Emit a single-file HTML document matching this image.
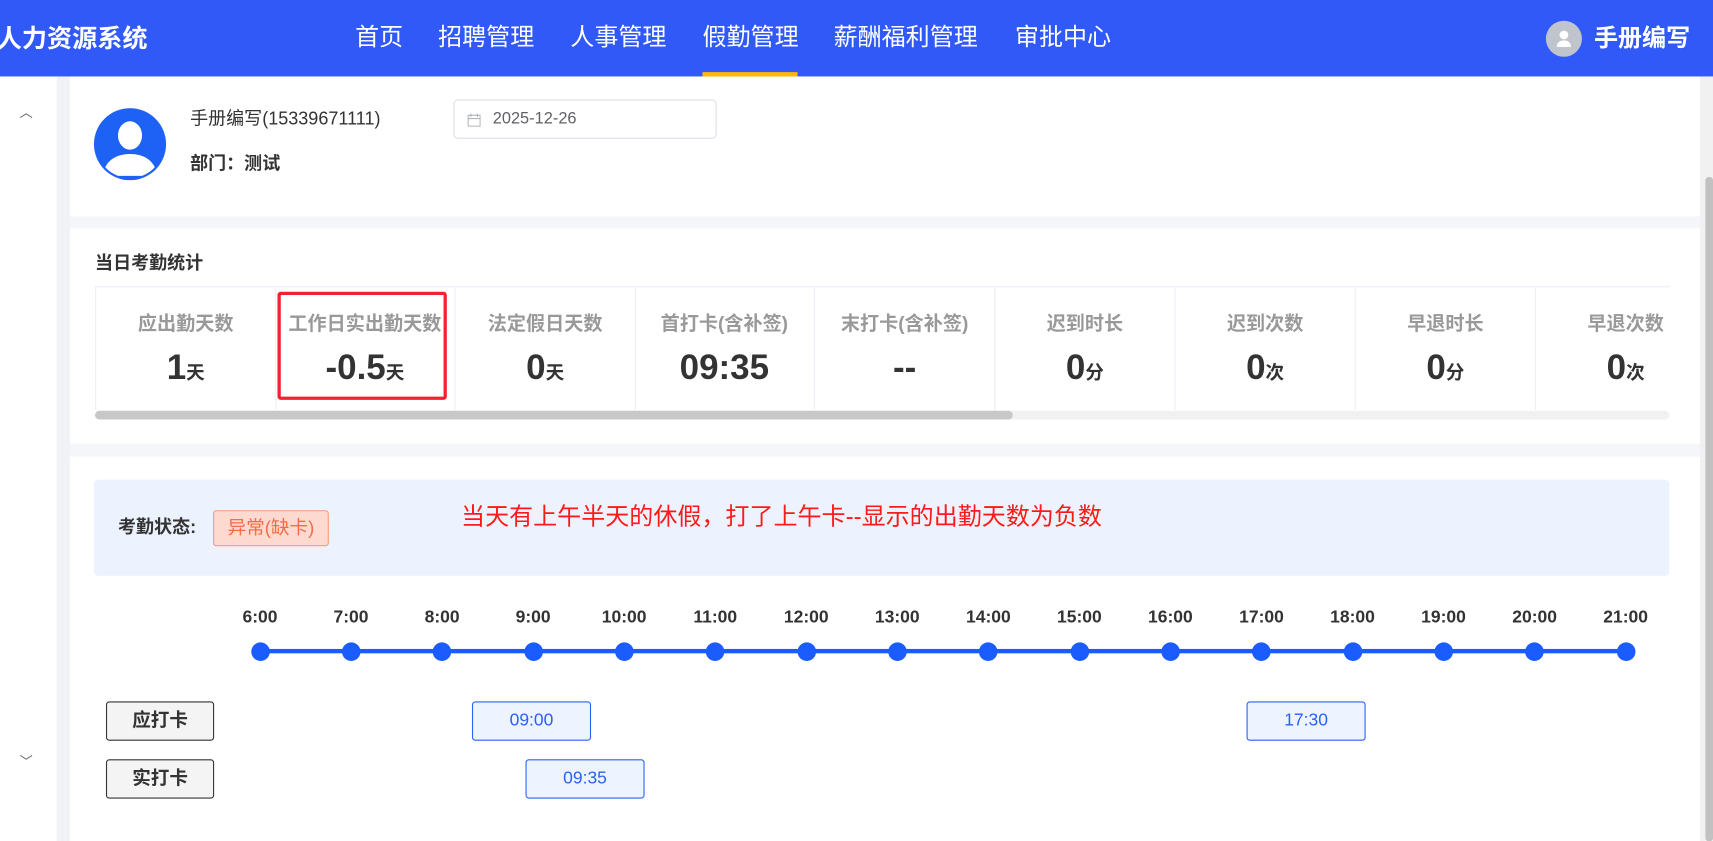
<!DOCTYPE html>
<html><head><meta charset="utf-8">
<style>
*{margin:0;padding:0;box-sizing:border-box}
html,body{width:1713px;height:841px;overflow:hidden;background:#fff}
body{font-family:"Liberation Sans","Noto Sans CJK SC",sans-serif;color:#333}
#w{position:absolute;left:0;top:0;width:1568px;height:770px;transform:scale(1.0925);transform-origin:0 0;background:#f5f6fa;overflow:hidden}
.a{position:absolute}
.nav{left:0;top:0;width:1568px;height:70px;background:#3059f7;color:#fff}
.nav .m{position:absolute;top:19px;font-size:22px;line-height:30px}
.cell{position:absolute;top:0;width:165px;height:113px;border-right:1px solid #ebeef5;text-align:center}
.cell .l{position:absolute;top:21px;left:-10px;right:-10px;font-size:17.5px;font-weight:bold;color:#999;line-height:24px}
.cell .v{position:absolute;top:53px;left:0;right:0;font-size:32px;font-weight:bold;color:#333;line-height:40px}
.cell .v small{font-size:17px}
.tl{position:absolute;top:556px;font-size:16px;font-weight:bold;width:60px;margin-left:-30px;text-align:center;line-height:20px}
.dot{position:absolute;top:588px;width:17px;height:17px;border-radius:50%;background:#1a5cff;margin-left:-8.5px}
.btn{position:absolute;left:97px;width:99px;height:36px;background:#f4f4f4;border:1px solid #333;border-radius:3px;font-size:17px;font-weight:bold;text-align:center;line-height:34px}
.chip{position:absolute;width:109px;height:36px;background:#edf3ff;border:1px solid #2b62f5;border-radius:3px;color:#2b62f5;font-size:16px;text-align:center;line-height:34px}
</style></head><body>
<div id="w">
<div class="a nav">
  <div class="a" style="left:-3px;top:19px;font-size:23px;font-weight:bold;line-height:32px">人力资源系统</div>
  <div class="m" style="left:325px">首页</div>
  <div class="m" style="left:401px">招聘管理</div>
  <div class="m" style="left:522px">人事管理</div>
  <div class="m" style="left:643px">假勤管理</div>
  <div class="a" style="left:643px;top:66px;width:87px;height:4px;background:#ffb800"></div>
  <div class="m" style="left:763px">薪酬福利管理</div>
  <div class="m" style="left:929px">审批中心</div>
  <div class="a" style="left:1415px;top:19px;width:33px;height:33px;border-radius:50%;background:#c0c4cc">
    <svg width="33" height="33" viewBox="0 0 33 33"><circle cx="16.5" cy="13" r="4" fill="#fff"/><path d="M10 24c0-4 3-6 6.5-6s6.5 2 6.5 6z" fill="#fff"/></svg>
  </div>
  <div class="a" style="left:1459px;top:20px;font-size:22px;font-weight:bold;line-height:30px">手册编写</div>
</div>
<div class="a" style="left:0;top:70px;width:52px;height:700px;background:#fff"></div>
<div class="a" style="left:52px;top:70px;width:12px;height:700px;background:#f0f2f5"></div>
<div class="a" style="left:18px;top:94px;font-size:12px;color:#666">︿</div>
<div class="a" style="left:18px;top:688px;font-size:12px;color:#666">﹀</div>
<div class="a" style="left:64px;top:70px;width:1492px;height:128px;background:#fff"></div>
<div class="a" style="left:64px;top:209px;width:1492px;height:197px;background:#fff"></div>
<div class="a" style="left:64px;top:418px;width:1492px;height:352px;background:#fff"></div>
<div class="a" style="left:1556px;top:70px;width:12px;height:700px;background:#f1f1f1"></div>
<div class="a" style="left:1561px;top:162px;width:7px;height:608px;background:#c1c1c1;border-radius:3px"></div>
<div class="a" style="left:86px;top:99px">
<svg width="66" height="66" viewBox="0 0 66 66"><defs><clipPath id="c"><circle cx="33" cy="33" r="31"/></clipPath></defs><circle cx="33" cy="33" r="33" fill="#1e62f5"/><g clip-path="url(#c)"><ellipse cx="33" cy="25" rx="11" ry="13" fill="#fff"/><path d="M8 62c2-14 12-20 25-20s23 6 25 20z" fill="#fff"/></g></svg>
</div>
<div class="a" style="left:174px;top:98px;font-size:16.5px;line-height:22px;color:#333">手册编写(15339671111)</div>
<div class="a" style="left:174px;top:139px;font-size:16.5px;line-height:22px;font-weight:bold">部门：测试</div>
<div class="a" style="left:415px;top:91px;width:241px;height:36px;border:1px solid #dcdfe6;border-radius:4px"></div>
<div class="a" style="left:428px;top:103px"><svg width="12" height="12" viewBox="0 0 12 12" fill="none" stroke="#b0b3b8"><rect x=".5" y="1.5" width="11" height="10"/><path d="M.5 4.5h11M3 0v3M9 0v3"/></svg></div>
<div class="a" style="left:451px;top:99px;font-size:15px;color:#606266;line-height:20px">2025-12-26</div>
<div class="a" style="left:87px;top:230px;font-size:16.5px;font-weight:bold;line-height:22px">当日考勤统计</div>
<div class="a" style="left:87px;top:262px;width:1441px;height:113px;border-top:1px solid #ebeef5;border-left:1px solid #ebeef5;overflow:hidden">
  <div class="cell" style="left:0"><div class="l">应出勤天数</div><div class="v">1<small>天</small></div></div>
  <div class="cell" style="left:164px"><div class="l">工作日实出勤天数</div><div class="v">-0.5<small>天</small></div></div>
  <div class="cell" style="left:329px"><div class="l">法定假日天数</div><div class="v">0<small>天</small></div></div>
  <div class="cell" style="left:493px"><div class="l">首打卡(含补签)</div><div class="v">09:35</div></div>
  <div class="cell" style="left:658px"><div class="l">末打卡(含补签)</div><div class="v">--</div></div>
  <div class="cell" style="left:823px"><div class="l">迟到时长</div><div class="v">0<small>分</small></div></div>
  <div class="cell" style="left:988px"><div class="l">迟到次数</div><div class="v">0<small>次</small></div></div>
  <div class="cell" style="left:1153px"><div class="l">早退时长</div><div class="v">0<small>分</small></div></div>
  <div class="cell" style="left:1318px"><div class="l">早退次数</div><div class="v">0<small>次</small></div></div>
</div>
<div class="a" style="left:254px;top:267px;width:155px;height:99px;border:3px solid #f5222d;border-radius:3px"></div>
<div class="a" style="left:87px;top:376px;width:1441px;height:8px;background:#f1f1f1;border-radius:4px"></div>
<div class="a" style="left:87px;top:376px;width:840px;height:8px;background:#c8c8c8;border-radius:4px"></div>
<div class="a" style="left:86px;top:439px;width:1442px;height:88px;background:#ecf3fe;border-radius:4px"></div>
<div class="a" style="left:108px;top:472px;font-size:16.5px;font-weight:bold;line-height:22px">考勤状态:</div>
<div class="a" style="left:195px;top:467px;width:106px;height:33px;background:#fdd9cf;border:1px solid #f89a7d;border-radius:3px;color:#f56c45;font-size:17px;text-align:center;line-height:31px">异常(缺卡)</div>
<div class="a" style="left:422px;top:459px;font-size:22px;color:#ff1a1a;line-height:28px">当天有上午半天的休假，打了上午卡--显示的出勤天数为负数</div>
<div class="a" style="left:238px;top:594px;width:1250px;height:4px;background:#1a5cff"></div>
<div class="tl" style="left:238px">6:00</div><div class="dot" style="left:238px"></div>
<div class="tl" style="left:321.3px">7:00</div><div class="dot" style="left:321.3px"></div>
<div class="tl" style="left:404.7px">8:00</div><div class="dot" style="left:404.7px"></div>
<div class="tl" style="left:488px">9:00</div><div class="dot" style="left:488px"></div>
<div class="tl" style="left:571.3px">10:00</div><div class="dot" style="left:571.3px"></div>
<div class="tl" style="left:654.7px">11:00</div><div class="dot" style="left:654.7px"></div>
<div class="tl" style="left:738px">12:00</div><div class="dot" style="left:738px"></div>
<div class="tl" style="left:821.3px">13:00</div><div class="dot" style="left:821.3px"></div>
<div class="tl" style="left:904.7px">14:00</div><div class="dot" style="left:904.7px"></div>
<div class="tl" style="left:988px">15:00</div><div class="dot" style="left:988px"></div>
<div class="tl" style="left:1071.3px">16:00</div><div class="dot" style="left:1071.3px"></div>
<div class="tl" style="left:1154.7px">17:00</div><div class="dot" style="left:1154.7px"></div>
<div class="tl" style="left:1238px">18:00</div><div class="dot" style="left:1238px"></div>
<div class="tl" style="left:1321.3px">19:00</div><div class="dot" style="left:1321.3px"></div>
<div class="tl" style="left:1404.7px">20:00</div><div class="dot" style="left:1404.7px"></div>
<div class="tl" style="left:1488px">21:00</div><div class="dot" style="left:1488px"></div>
<div class="btn" style="top:642px">应打卡</div>
<div class="btn" style="top:695px">实打卡</div>
<div class="chip" style="left:432px;top:642px">09:00</div>
<div class="chip" style="left:1141px;top:642px">17:30</div>
<div class="chip" style="left:481px;top:695px">09:35</div>
</div>
</body></html>
